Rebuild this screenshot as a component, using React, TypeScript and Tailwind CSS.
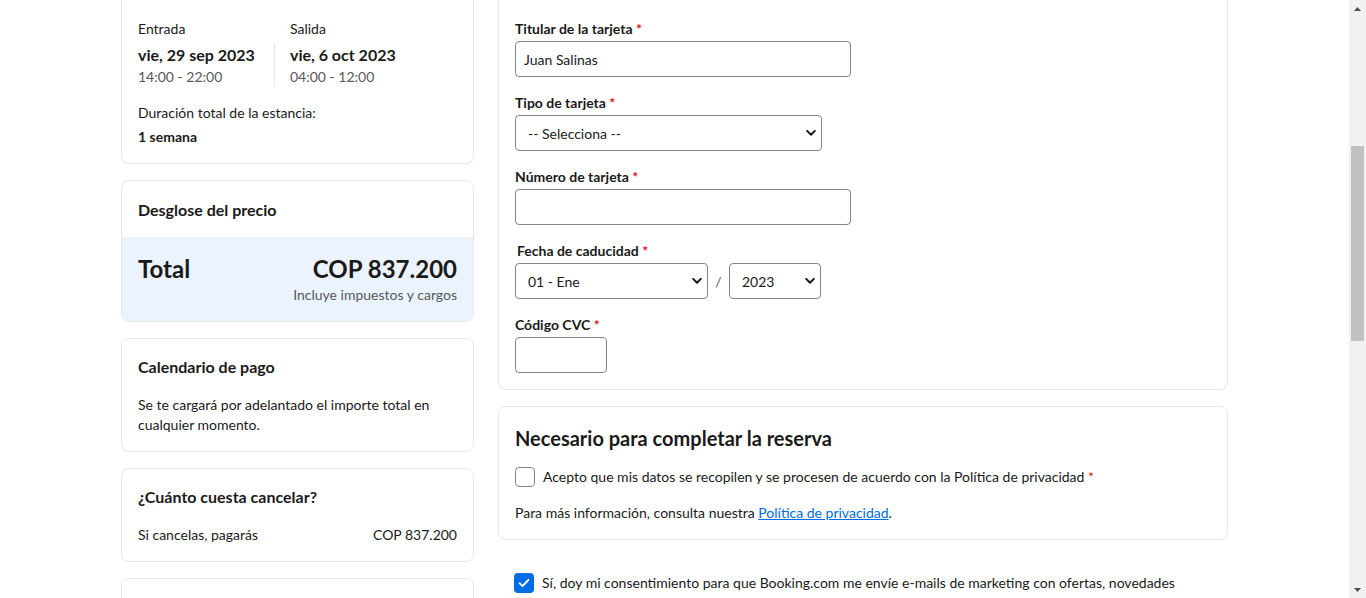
import React from "react";

const Req = () => <span className="text-[#d4111e]"> *</span>;

function Chevron() {
  return (
    <svg width="10" height="7" viewBox="0 0 10 7" className="pointer-events-none absolute right-[6px] top-1/2 -translate-y-1/2">
      <path d="M1.2 1.4 L5 5.2 L8.8 1.4" fill="none" stroke="#1a1a1a" strokeWidth="2" strokeLinecap="round" strokeLinejoin="round" />
    </svg>
  );
}

function Select({ value, width }: { value: string; width: string }) {
  return (
    <div className={`relative ${width}`}>
      <select
        defaultValue={value}
        className="h-9 w-full appearance-none rounded-[4px] border border-[#868686] bg-white pl-[12px] pr-8 text-[14px] text-[#1a1a1a] outline-none"
      >
        <option>{value}</option>
      </select>
      <Chevron />
    </div>
  );
}

function Card({ children, className = "" }: { children: React.ReactNode; className?: string }) {
  return <div className={`rounded-lg border border-[#e7e7e7] bg-white ${className}`}>{children}</div>;
}

export default function App() {
  return (
    <div
      className="flex h-[598px] w-[1366px] overflow-hidden bg-white text-[#1a1a1a]"
      style={{ fontFamily: "Lato, 'Noto Sans', sans-serif" }}
    >
      <div className="flex-1 overflow-hidden">
        <div className="mx-auto flex w-[1107px] items-start gap-6">
          {/* Left column */}
          <div className="flex w-[353px] shrink-0 flex-col gap-4">
            <div className="rounded-b-lg border border-t-0 border-[#e7e7e7] px-4 pb-4 pt-[19px]">
              <div className="flex">
                <div className="w-[136px]">
                  <div className="text-[14px] leading-5">Entrada</div>
                  <div className="mt-1">
                    <div className="text-[16px] font-bold leading-6">vie, 29 sep 2023</div>
                    <div className="text-[14px] leading-5 text-[#595959]">14:00 - 22:00</div>
                  </div>
                </div>
                <div className="flex-1">
                  <div className="pl-4 text-[14px] leading-5">Salida</div>
                  <div className="mt-1 border-l border-[#e7e7e7] pl-[15px]">
                    <div className="text-[16px] font-bold leading-6">vie, 6 oct 2023</div>
                    <div className="text-[14px] leading-5 text-[#595959]">04:00 - 12:00</div>
                  </div>
                </div>
              </div>
              <div className="mt-4 text-[14px] leading-5">Duración total de la estancia:</div>
              <div className="mt-1 text-[14px] font-bold leading-5">1 semana</div>
            </div>

            <Card className="overflow-hidden">
              <div className="px-4 pb-[15px] pt-[17px] text-[16px] font-bold leading-6">Desglose del precio</div>
              <div className="flex items-start justify-between bg-[#ebf3ff] px-4 pb-4 pt-4">
                <div className="text-[24px] font-bold leading-8">Total</div>
                <div className="text-right">
                  <div className="text-[24px] font-bold leading-8">COP 837.200</div>
                  <div className="text-[14px] leading-5 text-[#595959]">Incluye impuestos y cargos</div>
                </div>
              </div>
            </Card>

            <Card className="p-4">
              <div className="text-[16px] font-bold leading-6">Calendario de pago</div>
              <div className="mt-4 text-[14px] leading-5">
                Se te cargará por adelantado el importe total en cualquier momento.
              </div>
            </Card>

            <Card className="p-4">
              <div className="text-[16px] font-bold leading-6">¿Cuánto cuesta cancelar?</div>
              <div className="mt-4 flex justify-between text-[14px] leading-5">
                <span>Si cancelas, pagarás</span>
                <span>COP 837.200</span>
              </div>
            </Card>

            <Card className="h-[60px]">
              <div />
            </Card>
          </div>

          {/* Right column */}
          <div className="flex w-[730px] shrink-0 flex-col">
            <div className="rounded-b-lg border border-t-0 border-[#e7e7e7] px-4 pb-4 pt-[19px]">
              <div className="flex flex-col gap-4">
                <div>
                  <label className="mb-[2px] block text-[14px] font-bold leading-5">
                    Titular de la tarjeta<Req />
                  </label>
                  <input
                    defaultValue="Juan Salinas"
                    className="h-9 w-[336px] rounded-[4px] border border-[#868686] px-2 text-[14px] text-[#1a1a1a] outline-none"
                  />
                </div>
                <div>
                  <label className="mb-[2px] block text-[14px] font-bold leading-5">
                    Tipo de tarjeta<Req />
                  </label>
                  <Select value="-- Selecciona --" width="w-[307px]" />
                </div>
                <div>
                  <label className="mb-[2px] block text-[14px] font-bold leading-5">
                    Número de tarjeta<Req />
                  </label>
                  <input className="h-9 w-[336px] rounded-[4px] border border-[#868686] px-2 text-[14px] outline-none" />
                </div>
                <div>
                  <label className="mb-[2px] block pl-[2px] text-[14px] font-bold leading-5">
                    Fecha de caducidad<Req />
                  </label>
                  <div className="flex items-center">
                    <Select value="01 - Ene" width="w-[193px]" />
                    <span className="w-[21px] text-center text-[14px] text-[#595959]">/</span>
                    <Select value="2023" width="w-[92px]" />
                  </div>
                </div>
                <div>
                  <label className="mb-[2px] block text-[14px] font-bold leading-5">
                    Código CVC<Req />
                  </label>
                  <input className="h-9 w-[92px] rounded-[4px] border border-[#868686] px-2 text-[14px] outline-none" />
                </div>
              </div>
            </div>

            <Card className="mt-4 px-4 pb-4 pt-[17px]">
              <div className="text-[20px] font-bold leading-7">Necesario para completar la reserva</div>
              <label className="mt-[15px] flex items-center gap-2 text-[14px] leading-5">
                <span className="h-5 w-5 shrink-0 rounded-[4px] border border-[#868686] bg-white" />
                <span>
                  Acepto que mis datos se recopilen y se procesen de acuerdo con la Política de privacidad{" "}
                  <span className="text-[#d4111e]">*</span>
                </span>
              </label>
              <div className="mt-4 text-[14px] leading-5">
                Para más información, consulta nuestra{" "}
                <a className="text-[#006ce4] underline">Política de privacidad</a>.
              </div>
            </Card>

            <label className="mt-[33px] flex items-center gap-2 px-4 text-[14px] leading-5">
              <span className="flex h-5 w-5 shrink-0 items-center justify-center rounded-[4px] bg-[#006ce4]">
                <svg width="12" height="10" viewBox="0 0 12 10">
                  <path d="M1.5 5.2 L4.5 8 L10.5 1.8" fill="none" stroke="white" strokeWidth="1.8" strokeLinecap="round" strokeLinejoin="round" />
                </svg>
              </span>
              <span>Sí, doy mi consentimiento para que Booking.com me envíe e-mails de marketing con ofertas, novedades</span>
            </label>
          </div>
        </div>
      </div>

      {/* Scrollbar */}
      <div className="flex w-[17px] shrink-0 flex-col items-center bg-[#f1f1f1]">
        <div className="flex h-[17px] items-center justify-center">
          <svg width="7" height="4" viewBox="0 0 7 4"><path d="M0 4 L3.5 0 L7 4 Z" fill="#505050" /></svg>
        </div>
        <div className="mt-[129px] h-[195px] w-[13px] bg-[#c1c1c1]" />
        <div className="flex-1" />
        <div className="flex h-[17px] items-center justify-center">
          <svg width="7" height="4" viewBox="0 0 7 4"><path d="M0 0 L3.5 4 L7 0 Z" fill="#505050" /></svg>
        </div>
      </div>
    </div>
  );
}
